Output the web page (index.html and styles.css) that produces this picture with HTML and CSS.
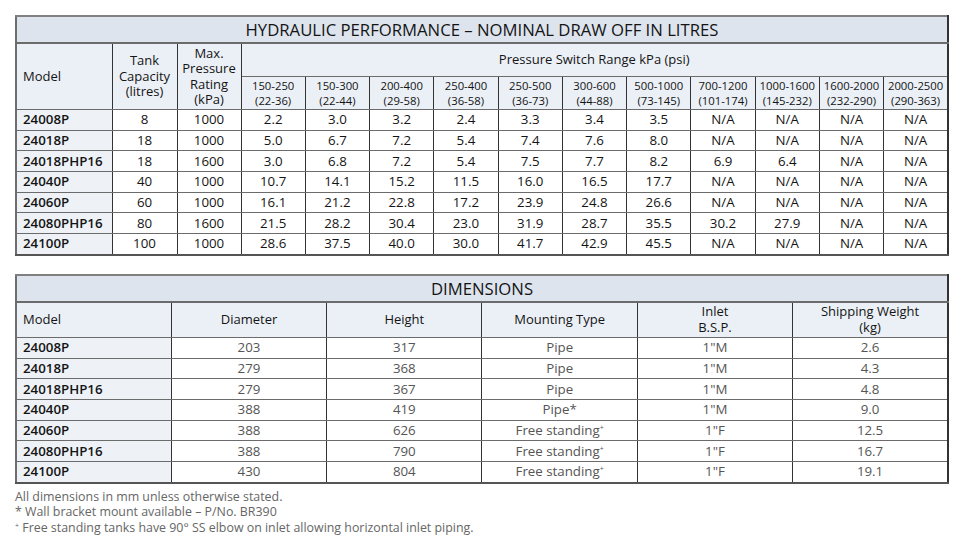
FILE: index.html
```html
<!DOCTYPE html>
<html lang="en">
<head>
    <meta charset="UTF-8">
    <title>Hydraulic Performance &amp; Dimensions</title>
    <link rel="stylesheet" href="styles.css">
</head>
<body>

    <table class="spec perf">
        <colgroup>
            <col class="c-model">
            <col class="c-tank">
            <col class="c-max">
            <col span="11" class="c-range">
        </colgroup>
        <thead>
            <tr class="title-row">
                <th colspan="14">HYDRAULIC PERFORMANCE – NOMINAL DRAW OFF IN LITRES</th>
            </tr>
            <tr class="head-row">
                <th rowspan="2" class="left">Model</th>
                <th rowspan="2">Tank<br>Capacity<br>(litres)</th>
                <th rowspan="2">Max.<br>Pressure<br>Rating<br>(kPa)</th>
                <th colspan="11" class="group">Pressure Switch Range kPa (psi)</th>
            </tr>
            <tr class="head-row range">
                <th>150-250<br>(22-36)</th>
                <th>150-300<br>(22-44)</th>
                <th>200-400<br>(29-58)</th>
                <th>250-400<br>(36-58)</th>
                <th>250-500<br>(36-73)</th>
                <th>300-600<br>(44-88)</th>
                <th>500-1000<br>(73-145)</th>
                <th>700-1200<br>(101-174)</th>
                <th>1000-1600<br>(145-232)</th>
                <th>1600-2000<br>(232-290)</th>
                <th>2000-2500<br>(290-363)</th>
            </tr>
        </thead>
        <tbody>
            <tr><td class="model">24008P</td><td>8</td><td>1000</td><td>2.2</td><td>3.0</td><td>3.2</td><td>2.4</td><td>3.3</td><td>3.4</td><td>3.5</td><td>N/A</td><td>N/A</td><td>N/A</td><td>N/A</td></tr>
            <tr><td class="model">24018P</td><td>18</td><td>1000</td><td>5.0</td><td>6.7</td><td>7.2</td><td>5.4</td><td>7.4</td><td>7.6</td><td>8.0</td><td>N/A</td><td>N/A</td><td>N/A</td><td>N/A</td></tr>
            <tr><td class="model">24018PHP16</td><td>18</td><td>1600</td><td>3.0</td><td>6.8</td><td>7.2</td><td>5.4</td><td>7.5</td><td>7.7</td><td>8.2</td><td>6.9</td><td>6.4</td><td>N/A</td><td>N/A</td></tr>
            <tr><td class="model">24040P</td><td>40</td><td>1000</td><td>10.7</td><td>14.1</td><td>15.2</td><td>11.5</td><td>16.0</td><td>16.5</td><td>17.7</td><td>N/A</td><td>N/A</td><td>N/A</td><td>N/A</td></tr>
            <tr><td class="model">24060P</td><td>60</td><td>1000</td><td>16.1</td><td>21.2</td><td>22.8</td><td>17.2</td><td>23.9</td><td>24.8</td><td>26.6</td><td>N/A</td><td>N/A</td><td>N/A</td><td>N/A</td></tr>
            <tr><td class="model">24080PHP16</td><td>80</td><td>1600</td><td>21.5</td><td>28.2</td><td>30.4</td><td>23.0</td><td>31.9</td><td>28.7</td><td>35.5</td><td>30.2</td><td>27.9</td><td>N/A</td><td>N/A</td></tr>
            <tr><td class="model">24100P</td><td>100</td><td>1000</td><td>28.6</td><td>37.5</td><td>40.0</td><td>30.0</td><td>41.7</td><td>42.9</td><td>45.5</td><td>N/A</td><td>N/A</td><td>N/A</td><td>N/A</td></tr>
        </tbody>
    </table>

    <table class="spec dims">
        <thead>
            <tr class="title-row">
                <th colspan="6">DIMENSIONS</th>
            </tr>
            <tr class="head-row">
                <th class="left">Model</th>
                <th>Diameter</th>
                <th>Height</th>
                <th>Mounting Type</th>
                <th>Inlet<br>B.S.P.</th>
                <th>Shipping Weight<br>(kg)</th>
            </tr>
        </thead>
        <tbody>
            <tr><td class="model">24008P</td><td>203</td><td>317</td><td>Pipe</td><td>1"M</td><td>2.6</td></tr>
            <tr><td class="model">24018P</td><td>279</td><td>368</td><td>Pipe</td><td>1"M</td><td>4.3</td></tr>
            <tr><td class="model">24018PHP16</td><td>279</td><td>367</td><td>Pipe</td><td>1"M</td><td>4.8</td></tr>
            <tr><td class="model">24040P</td><td>388</td><td>419</td><td>Pipe*</td><td>1"M</td><td>9.0</td></tr>
            <tr><td class="model">24060P</td><td>388</td><td>626</td><td>Free standing<sup>+</sup></td><td>1"F</td><td>12.5</td></tr>
            <tr><td class="model">24080PHP16</td><td>388</td><td>790</td><td>Free standing<sup>+</sup></td><td>1"F</td><td>16.7</td></tr>
            <tr><td class="model">24100P</td><td>430</td><td>804</td><td>Free standing<sup>+</sup></td><td>1"F</td><td>19.1</td></tr>
        </tbody>
    </table>

    <div class="notes">
        <p>All dimensions in mm unless otherwise stated.</p>
        <p>* Wall bracket mount available – P/No. BR390</p>
        <p><sup>+</sup> Free standing tanks have 90° SS elbow on inlet allowing horizontal inlet piping.</p>
    </div>

</body>
</html>
```

FILE: styles.css
```css
body {
    margin: 0;
    padding: 15px 15px 0 15px;
    background: #ffffff;
    color: #1c1c1c;
    font-family: "Open Sans", "Noto Sans", Arial, sans-serif;
}

.spec {
    width: 934px;
    border-collapse: collapse;
    table-layout: fixed;
    border-top: 2px solid #808080;
    border-left: 2px solid #6e6e6e;
    border-right: 2px solid #333333;
    border-bottom: 2px solid #555555;
}

.spec th,
.spec td {
    border-left: 1px solid #333333;
    border-right: 1px solid #333333;
    border-top: 1px solid #6b6b6b;
    border-bottom: 1px solid #6b6b6b;
    padding: 0;
    text-align: center;
    vertical-align: middle;
}

.title-row th {
    background: #dde4ee;
    height: 25px;
    font-size: 16.7px;
    font-weight: 400;
    color: #141414;
    border-bottom: 2px solid #6b6b6b;
}

.head-row th {
    background: #ebf0f6;
    font-size: 13px;
    font-weight: 400;
    line-height: 15.5px;
    color: #141414;
}

.head-row th.left {
    text-align: left;
    padding-left: 6px;
}

.head-row th.group {
    height: 32px;
}

.range th {
    height: 32px;
    font-size: 11.3px;
    line-height: 15px;
}

.spec td {
    height: 19.7px;
    font-size: 13.3px;
    line-height: 19px;
    background: #ffffff;
}

.spec td.model {
    background: #eef2f7;
    text-align: left;
    padding-left: 6px;
    font-weight: 600;
}

.c-model { width: 96px; }
.c-tank { width: 65px; }
.c-max { width: 64px; }

.perf td {
    color: #141414;
}

.dims {
    margin-top: 18px;
}

.dims .head-row th {
    height: 34px;
}

.dims td {
    color: #555555;
}

.dims td.model {
    color: #141414;
}

.dims sup {
    font-size: 7px;
    vertical-align: 5px;
    line-height: 0;
}

.notes {
    margin-top: 5px;
    font-size: 12.4px;
    line-height: 15.5px;
    color: #666666;
}

.notes p {
    margin: 0;
}

.notes sup {
    font-size: 7px;
    vertical-align: 4px;
    line-height: 0;
}
```
